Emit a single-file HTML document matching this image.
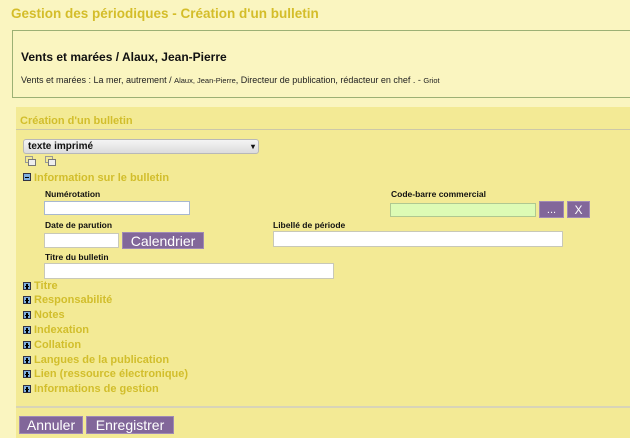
<!DOCTYPE html>
<html><head><meta charset="utf-8"><style>
html,body{margin:0;height:438px}
body{width:630px;background:#faf5c0;font-family:"Liberation Sans",sans-serif;position:relative;overflow:hidden}
.a{position:absolute;white-space:nowrap}
h1{position:absolute;left:11px;top:6px;margin:0;font-size:13.5px;color:#d4bd2a;font-weight:bold}
.box{position:absolute;left:12px;top:30px;width:630px;height:66px;border:1px solid #9cb074;background:#faf5c0}
.panel{position:absolute;left:16px;top:107px;width:620px;height:331px;background:#f3ea95}
.lbl{font-size:8.5px;font-weight:bold;color:#111}
.in{position:absolute;background:#fff;border:1px solid #c8c8b8;box-sizing:border-box}
.btn{position:absolute;background:#82679a;color:#fff;border:1px solid #a08ab5;box-sizing:border-box;text-align:center;font-size:14px;line-height:16px}
.sec{position:absolute;left:34px;font-size:11px;font-weight:bold;color:#d2be2c}
.ic{position:absolute;left:23px;width:8px;height:8px;background:#7fb0e0;border:1px solid #334;box-sizing:border-box}
.ic:before{content:"";position:absolute;left:1px;top:2.5px;width:4px;height:1.5px;background:#000}
.p:after{content:"";position:absolute;left:2.3px;top:0.5px;width:1.5px;height:5px;background:#000}
</style></head><body>
<h1>Gestion des périodiques - Création d'un bulletin</h1>
<div class="box"></div>
<div class="a" style="left:21px;top:50px;font-size:12px;font-weight:bold;color:#111">Vents et marées / Alaux, Jean-Pierre</div>
<div class="a" style="left:21px;top:75px;font-size:9px;color:#222">Vents et marées : La mer, autrement / <span style="font-size:7.5px">Alaux, Jean-Pierre</span>, Directeur de publication, rédacteur en chef . - <span style="font-size:7.5px">Griot</span></div>
<div class="panel"></div>
<div class="a" style="left:20px;top:115px;font-size:11px;font-weight:bold;color:#d2be2c">Création d'un bulletin</div>
<div class="a" style="left:16px;top:129px;width:620px;height:1px;background:#ccc8a8"></div>
<div class="a" style="left:23px;top:139px;width:236px;height:15px;background:linear-gradient(#f4f4f4,#dcdcdc);border:1px solid #b8b8b8;border-radius:3px;box-sizing:border-box;font-size:10px;font-weight:bold;line-height:13px;padding-left:4px;color:#111">texte imprimé<span style="position:absolute;right:3px;font-size:8px">▾</span></div>
<div class="a" style="left:25px;top:156px;width:6px;height:5px;border:1px solid #999"></div><div class="a" style="left:28px;top:159px;width:6px;height:5px;border:1px solid #777;background:#eee"></div>
<div class="a" style="left:45px;top:156px;width:6px;height:5px;border:1px solid #999"></div><div class="a" style="left:48px;top:159px;width:6px;height:5px;border:1px solid #777;background:#eee"></div>
<div class="ic" style="top:173px"></div><div class="sec" style="top:172px">Information sur le bulletin</div>
<div class="a lbl" style="left:45px;top:189px">Numérotation</div>
<div class="in" style="left:44px;top:201px;width:146px;height:14px;border-color:#a8b8d0"></div>
<div class="a lbl" style="left:391px;top:189px">Code-barre commercial</div>
<div class="in" style="left:390px;top:203px;width:146px;height:14px;background:#ddfbb5;border-color:#b0c890"></div>
<div class="btn" style="left:539px;top:201px;width:25px;height:17px;font-size:11px">...</div>
<div class="btn" style="left:567px;top:201px;width:23px;height:17px;font-size:12px">X</div>
<div class="a lbl" style="left:45px;top:220px">Date de parution</div>
<div class="in" style="left:44px;top:233px;width:75px;height:15px"></div>
<div class="btn" style="left:122px;top:232px;width:82px;height:17px">Calendrier</div>
<div class="a lbl" style="left:273px;top:220px">Libellé de période</div>
<div class="in" style="left:273px;top:231px;width:290px;height:16px"></div>
<div class="a lbl" style="left:45px;top:252px">Titre du bulletin</div>
<div class="in" style="left:44px;top:263px;width:290px;height:16px"></div>
<div class="ic p" style="top:282px"></div><div class="sec" style="top:280px">Titre</div>
<div class="ic p" style="top:296px"></div><div class="sec" style="top:294px">Responsabilité</div>
<div class="ic p" style="top:311px"></div><div class="sec" style="top:309px">Notes</div>
<div class="ic p" style="top:326px"></div><div class="sec" style="top:324px">Indexation</div>
<div class="ic p" style="top:341px"></div><div class="sec" style="top:339px">Collation</div>
<div class="ic p" style="top:356px"></div><div class="sec" style="top:354px">Langues de la publication</div>
<div class="ic p" style="top:370px"></div><div class="sec" style="top:368px">Lien (ressource électronique)</div>
<div class="ic p" style="top:385px"></div><div class="sec" style="top:383px">Informations de gestion</div>
<div class="a" style="left:16px;top:406px;width:620px;height:2px;background:#d8d4b8"></div>
<div class="btn" style="left:19px;top:416px;width:64px;height:18px">Annuler</div>
<div class="btn" style="left:86px;top:416px;width:88px;height:18px">Enregistrer</div>
</body></html>
